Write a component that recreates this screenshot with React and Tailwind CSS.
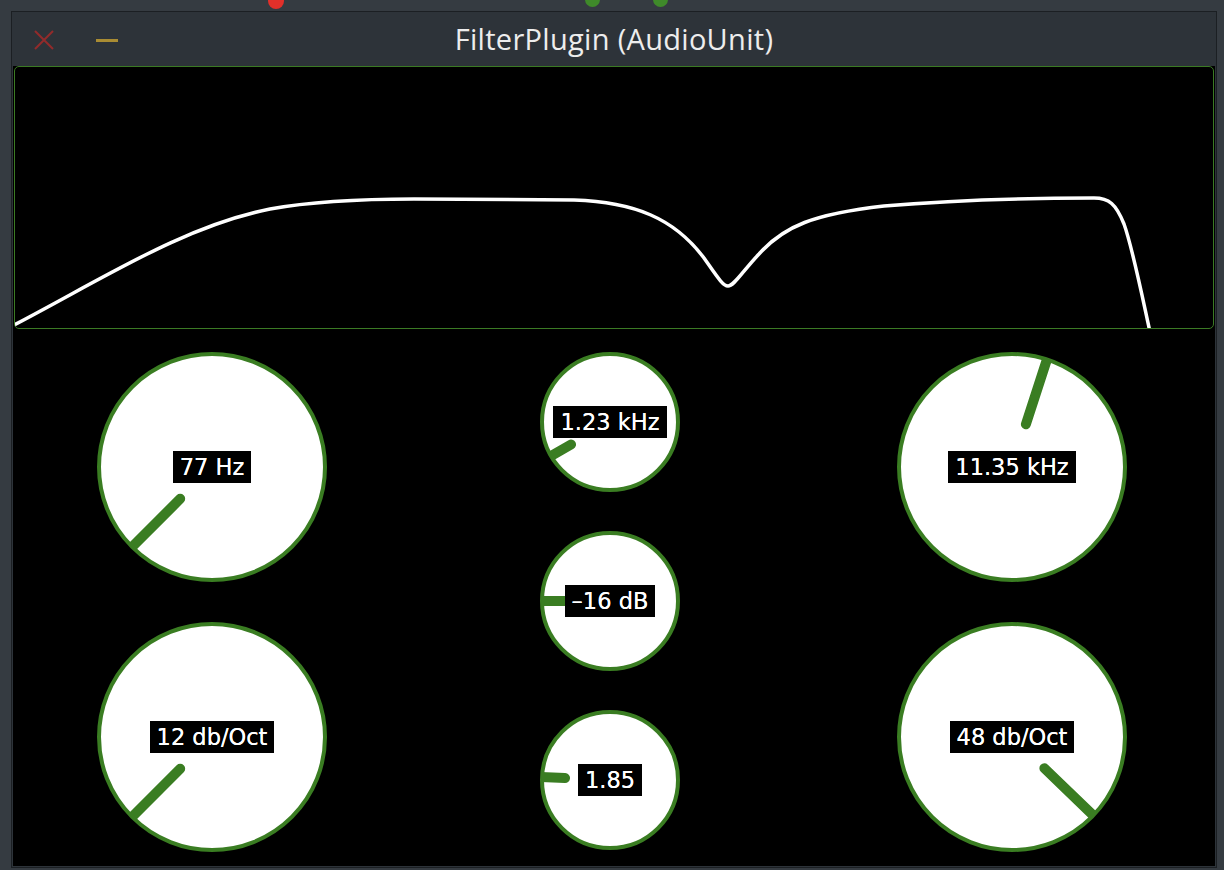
import React from "react";

const GREEN = "#3a7d22";

const Knob = ({ size, angle, label }) => {
  const r = size / 2;
  const rad = (angle * Math.PI) / 180;
  const x1 = r + Math.cos(rad) * 45;
  const y1 = r + Math.sin(rad) * 45;
  const x2 = r + Math.cos(rad) * (r + 8);
  const y2 = r + Math.sin(rad) * (r + 8);
  const clipId = `clip-${label.replace(/[^a-z0-9]/gi, "")}`;
  return (
    <div className="relative shrink-0" style={{ width: size, height: size }}>
      <svg width={size} height={size} className="block">
        <defs>
          <clipPath id={clipId}>
            <circle cx={r} cy={r} r={r - 1} />
          </clipPath>
        </defs>
        <circle cx={r} cy={r} r={r - 2} fill="#ffffff" stroke={GREEN} strokeWidth="4" />
        <line
          x1={x1}
          y1={y1}
          x2={x2}
          y2={y2}
          stroke={GREEN}
          strokeWidth="10"
          strokeLinecap="round"
          clipPath={`url(#${clipId})`}
        />
      </svg>
      <div className="absolute inset-0 flex items-center justify-center">
        <span className="h-8 px-[7px] bg-black text-white text-[22.5px] leading-8 whitespace-nowrap font-['DejaVu_Sans',sans-serif] [text-shadow:0_0_0.4px_#fff]">
          {label}
        </span>
      </div>
    </div>
  );
};

const ResponseGraph = () => (
  <div className="relative mx-px h-[263px] rounded-[5px] border border-[#3b7a24] bg-black overflow-hidden">
    <svg className="absolute -inset-px" width="1200" height="263" viewBox="0 0 1200 263">
      <path
        d="M0 259 C 90 212, 170 160, 256 143 C 300 135, 350 133, 400 133 L 560 134 C 620 136, 660 152, 690 192 C 704 212, 709 220, 714 220 C 720 220, 728 206, 745 188 C 770 160, 800 148, 870 140 C 950 133, 1030 132, 1080 132 C 1095 132, 1102 138, 1110 158 C 1118 180, 1126 220, 1136 266"
        fill="none"
        stroke="#ffffff"
        strokeWidth="3.5"
        strokeLinejoin="round"
      />
    </svg>
  </div>
);

export default function App() {
  return (
    <div className="relative w-[1224px] h-[870px] bg-[#353b41] overflow-hidden">
      {/* dots from windows behind */}
      <div className="absolute left-[268px] -top-[7px] w-4 h-4 rounded-full bg-[#e2302a]" />
      <div className="absolute left-[585px] -top-[8px] w-[15px] h-[15px] rounded-full bg-[#3f8a2a]" />
      <div className="absolute left-[653px] -top-[8px] w-[15px] h-[15px] rounded-full bg-[#3f8a2a]" />

      <div className="absolute left-[11px] top-[11px] w-[1206px] h-[857px] border border-[#1b1f23] bg-[#2d3339] px-px pb-px flex flex-col">
        {/* Title bar */}
        <div className="relative h-[54px] flex items-center justify-center shrink-0">
          <div className="absolute left-[21px] top-[18px] w-5 h-5">
            <svg width="20" height="20" viewBox="0 0 20 20">
              <path d="M1 1 L19 19 M19 1 L1 19" stroke="#922b2b" strokeWidth="2" />
            </svg>
          </div>
          <div className="absolute left-[83px] top-[27px] w-[22px] h-[3px] bg-[#a98c33]" />
          <span className="text-[29px] leading-none text-[#ededed] font-['Open_Sans',sans-serif] tracking-[0.3px] -mt-[2px]">
            FilterPlugin (AudioUnit)
          </span>
        </div>

        {/* Content */}
        <div className="flex-1 bg-black flex flex-col">
          <ResponseGraph />
          <div className="flex pl-[84px] pt-[23px]">
            <div className="flex flex-col gap-[40px]">
              <Knob size={230} angle={135} label="77 Hz" />
              <Knob size={230} angle={135} label="12 db/Oct" />
            </div>
            <div className="flex flex-col gap-[39px] ml-[213px] mr-[217px]">
              <Knob size={140} angle={150} label="1.23 kHz" />
              <Knob size={140} angle={180} label="–16 dB" />
              <Knob size={140} angle={182.5} label="1.85" />
            </div>
            <div className="flex flex-col gap-[40px]">
              <Knob size={230} angle={288} label="11.35 kHz" />
              <Knob size={230} angle={44} label="48 db/Oct" />
            </div>
          </div>
        </div>
      </div>
    </div>
  );
}
